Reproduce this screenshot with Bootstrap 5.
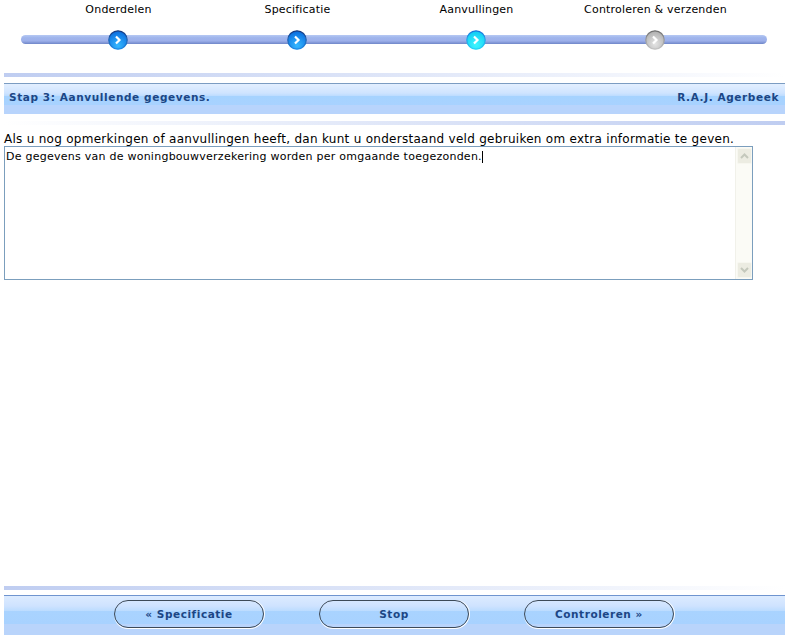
<!DOCTYPE html>
<html lang="nl">
<head>
  <meta charset="UTF-8">
  <meta name="viewport" content="width=device-width, initial-scale=1">
  <title>Stap 3: Aanvullende gegevens</title>
  <link href="https://cdn.jsdelivr.net/npm/bootstrap@5.3.2/dist/css/bootstrap.min.css" rel="stylesheet">
  <style>
    html, body { height: 100%; overflow: hidden; }
    body { font-family: "DejaVu Sans", Verdana, sans-serif; font-size: 11px; color: #000; background: #fff; }
    .wiz-page { height: 638px; padding: 3px 1px 3px 4px; }
    .wiz-labels { margin-left: -4px; padding-left: 29px; height: 14px; line-height: 14px; }
    .wiz-labels span { width: 179px; text-align: center; white-space: nowrap; font-size: 11px; letter-spacing: .2px; }
    .wiz-track { width: 746px; height: 9px; margin: 18px 0 0 17px; padding-left: 7px; border-radius: 5px;
      background: linear-gradient(#b6c9f3 0, #9fb5ec 30%, #9db0ea 65%, #6f86c9 100%); }
    .wiz-stop { width: 179px; }
    .wiz-stop svg { display: block; flex: none; }
    .wiz-fade { height: 4px; background: linear-gradient(90deg, #bfcdf1, #ffffff); }
    .wiz-fade-rev { background: linear-gradient(90deg, #ffffff, #bfcdf1); margin-top: 7px; }
    .wiz-fade-top { margin-top: 29px; }
    .wiz-head { height: 31px; margin-top: 6px; padding: 0 6px 2px 5px; border-top: 1px solid #7b9cc2;
      background: linear-gradient(#e3efff 0, #cfe4ff 30%, #bcdcff 40%, #a6d3ff 41%, #a8d2ff 70%, #b8d4fc 71%, #b8d4fc 100%);
      color: #1c4685; font-weight: 700; font-size: 10.5px; letter-spacing: .6px; }
    .wiz-intro { margin: 7px 0 0; height: 14px; line-height: 14px; font-size: 12px; letter-spacing: .28px; white-space: nowrap; }
    .wiz-box { width: 749px; height: 134px; border: 1px solid #7b9ebd; }
    .wiz-input { resize: none; border: 0; outline: 0; padding: 3px 1px; font-family: inherit; font-size: 11px; letter-spacing: .25px; line-height: 13px; overflow: hidden; color: #000; }
    .wiz-caret { left: 477px; top: 4px; width: 1px; height: 12px; background: #000; }
    .wiz-rail { width: 17px; background: #fbfbf6; border-left: 1px solid #f1f1ea; padding: 1px 0 1px 1px; }
    .wiz-arrow { height: 16px; background: #ecece2; border: 1px solid #f7f7f0; border-radius: 2px; }
    .wiz-foot { height: 40px; margin-top: 5px; padding: 4px 1px 0 0; gap: 55px; border-top: 1px solid #6f94cf;
      background: linear-gradient(#dcebff 0, #cfe3ff 25%, #bcdcff 38%, #a9d3ff 39%, #a8d2ff 72%, #b9d4fb 73%, #b9d4fb 100%); }
    .btn.wiz-btn { width: 150px; height: 28px; padding: 0; border: 1px solid #3d4a58; border-radius: 14px;
      box-shadow: 0 1px 0 #fff, 1px 0 0 #fff; background: transparent; color: #1c4685;
      font-family: inherit; font-size: 10.5px; font-weight: 700; letter-spacing: .55px; line-height: 26px; }
  </style>
</head>
<body>

  <svg width="0" height="0" class="position-absolute">
    <defs>
      <radialGradient id="gBlue" cx="50%" cy="80%" r="75%">
        <stop offset="0" stop-color="#35b8ff"/><stop offset="1" stop-color="#0b6fe0"/>
      </radialGradient>
      <radialGradient id="gCyan" cx="50%" cy="75%" r="70%">
        <stop offset="0" stop-color="#3ff6ff"/><stop offset="1" stop-color="#12cdf4"/>
      </radialGradient>
      <radialGradient id="gGrey" cx="50%" cy="70%" r="70%">
        <stop offset="0" stop-color="#e6e6e6"/><stop offset="1" stop-color="#adadad"/>
      </radialGradient>
      <linearGradient id="rBlue" x1="0" y1="0" x2="0" y2="1">
        <stop offset="0" stop-color="#17397f"/><stop offset="1" stop-color="#1d8be8"/>
      </linearGradient>
      <linearGradient id="rCyan" x1="0" y1="0" x2="0" y2="1">
        <stop offset="0" stop-color="#1c74dc"/><stop offset="1" stop-color="#22d6f6"/>
      </linearGradient>
      <linearGradient id="rGrey" x1="0" y1="0" x2="0" y2="1">
        <stop offset="0" stop-color="#6f6f6f"/><stop offset="1" stop-color="#c4c4c4"/>
      </linearGradient>
    </defs>
  </svg>

  <div class="wiz-page d-flex flex-column">
    <div class="wiz-labels d-flex">
      <span>Onderdelen</span>
      <span>Specificatie</span>
      <span>Aanvullingen</span>
      <span>Controleren &amp; verzenden</span>
    </div>

    <div class="wiz-track d-flex align-items-center">
      <div class="wiz-stop d-flex justify-content-center">
        <svg width="20" height="20" viewBox="0 0 20 20"><circle cx="10" cy="10" r="9.2" fill="url(#gBlue)" stroke="url(#rBlue)" stroke-width="1.2"/><path d="M8 6.5l3.5 3.5L8 13.5" fill="none" stroke="#fff" stroke-width="2.2"/></svg>
      </div>
      <div class="wiz-stop d-flex justify-content-center">
        <svg width="20" height="20" viewBox="0 0 20 20"><circle cx="10" cy="10" r="9.2" fill="url(#gBlue)" stroke="url(#rBlue)" stroke-width="1.2"/><path d="M8 6.5l3.5 3.5L8 13.5" fill="none" stroke="#fff" stroke-width="2.2"/></svg>
      </div>
      <div class="wiz-stop d-flex justify-content-center">
        <svg width="20" height="20" viewBox="0 0 20 20"><circle cx="10" cy="10" r="9.2" fill="url(#gCyan)" stroke="url(#rCyan)" stroke-width="1.2"/><path d="M8 6.5l3.5 3.5L8 13.5" fill="none" stroke="#fff" stroke-width="2.2"/></svg>
      </div>
      <div class="wiz-stop d-flex justify-content-center">
        <svg width="20" height="20" viewBox="0 0 20 20"><circle cx="10" cy="10" r="9.2" fill="url(#gGrey)" stroke="url(#rGrey)" stroke-width="1.2"/><path d="M8 6.5l3.5 3.5L8 13.5" fill="none" stroke="#fff" stroke-width="2.2"/></svg>
      </div>
    </div>

    <div class="wiz-fade wiz-fade-top"></div>
    <div class="wiz-head d-flex justify-content-between align-items-center">
      <span>Stap 3: Aanvullende gegevens.</span>
      <span>R.A.J. Agerbeek</span>
    </div>
    <div class="wiz-fade wiz-fade-rev"></div>

    <p class="wiz-intro">Als u nog opmerkingen of aanvullingen heeft, dan kunt u onderstaand veld gebruiken om extra informatie te geven.</p>
    <div class="wiz-box d-flex position-relative">
      <textarea class="wiz-input flex-grow-1">De gegevens van de woningbouwverzekering worden per omgaande toegezonden.</textarea>
      <span class="wiz-caret position-absolute"></span>
      <div class="wiz-rail d-flex flex-column justify-content-between">
        <div class="wiz-arrow d-flex align-items-center justify-content-center">
          <svg width="9" height="6" viewBox="0 0 9 6"><path d="M1 5l3.5-3.5L8 5" fill="none" stroke="#c4c8bc" stroke-width="2"/></svg>
        </div>
        <div class="wiz-arrow d-flex align-items-center justify-content-center">
          <svg width="9" height="6" viewBox="0 0 9 6"><path d="M1 1l3.5 3.5L8 1" fill="none" stroke="#c4c8bc" stroke-width="2"/></svg>
        </div>
      </div>
    </div>

    <div class="wiz-fade mt-auto"></div>
    <div class="wiz-foot d-flex justify-content-center align-items-start">
      <button type="button" class="btn wiz-btn">« Specificatie</button>
      <button type="button" class="btn wiz-btn">Stop</button>
      <button type="button" class="btn wiz-btn">Controleren »</button>
    </div>
  </div>

  <script src="https://cdn.jsdelivr.net/npm/bootstrap@5.3.2/dist/js/bootstrap.bundle.min.js"></script>
</body>
</html>
